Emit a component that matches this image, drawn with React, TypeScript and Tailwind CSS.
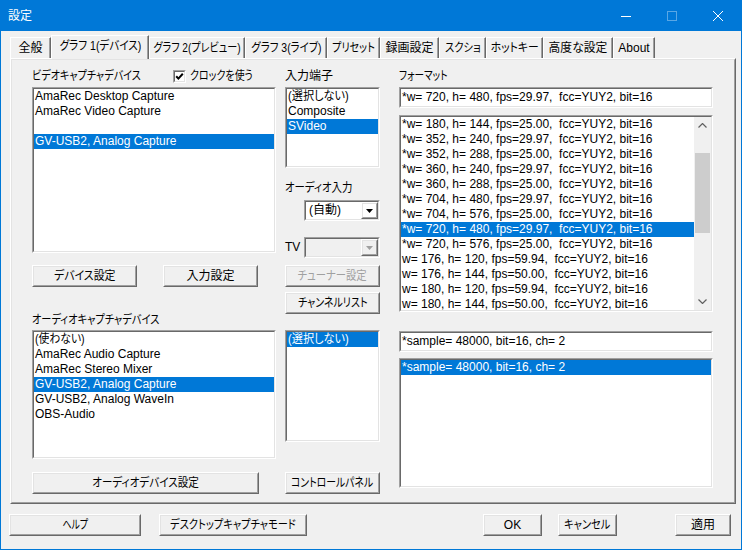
import React from "react";

type P = { className?: string; innerClassName?: string; children?: React.ReactNode };

function Raised({ className = "", innerClassName = "", children }: P) {
  return (
    <div className={`border border-t-white border-l-white border-r-[#696969] border-b-[#696969] ${className}`}>
      <div className={`h-full w-full border border-t-[#e3e3e3] border-l-[#e3e3e3] border-r-[#a0a0a0] border-b-[#a0a0a0] ${innerClassName}`}>
        {children}
      </div>
    </div>
  );
}

function Sunken({ className = "", innerClassName = "", children }: P) {
  return (
    <div className={`border border-t-[#a0a0a0] border-l-[#a0a0a0] border-r-white border-b-white ${className}`}>
      <div className={`h-full w-full border border-t-[#696969] border-l-[#696969] border-r-[#e3e3e3] border-b-[#e3e3e3] ${innerClassName}`}>
        {children}
      </div>
    </div>
  );
}

/* Japanese text, narrowed like the UI font of the reference */
function J({ s, o = "origin-left", children }: { s: string; o?: string; children: React.ReactNode }) {
  return <span className={`inline-block whitespace-nowrap ${o} ${s}`}>{children}</span>;
}

function Btn({ className = "", children, disabled }: P & { disabled?: boolean }) {
  return (
    <Raised
      className={`h-[22px] ${className}`}
      innerClassName={`flex items-center justify-center whitespace-nowrap ${disabled ? "text-[#a0a0a0]" : "text-black"}`}
    >
      {children}
    </Raised>
  );
}

function Item({ children, sel }: { children: React.ReactNode; sel?: boolean }) {
  return (
    <div className={`h-[15px] leading-[15px] px-px whitespace-pre ${sel ? "bg-[#0078d7] text-white" : "text-black"}`}>
      {children}
    </div>
  );
}

function Arrow({ color }: { color: string }) {
  return (
    <svg width="7" height="4" viewBox="0 0 7 4">
      <polygon points="0,0 7,0 3.5,4" fill={color} />
    </svg>
  );
}

const formats = [
  "*w= 180, h= 144, fps=25.00,  fcc=YUY2, bit=16",
  "*w= 352, h= 240, fps=29.97,  fcc=YUY2, bit=16",
  "*w= 352, h= 288, fps=25.00,  fcc=YUY2, bit=16",
  "*w= 360, h= 240, fps=29.97,  fcc=YUY2, bit=16",
  "*w= 360, h= 288, fps=25.00,  fcc=YUY2, bit=16",
  "*w= 704, h= 480, fps=29.97,  fcc=YUY2, bit=16",
  "*w= 704, h= 576, fps=25.00,  fcc=YUY2, bit=16",
  "*w= 720, h= 480, fps=29.97,  fcc=YUY2, bit=16",
  "*w= 720, h= 576, fps=25.00,  fcc=YUY2, bit=16",
  "w= 176, h= 120, fps=59.94,  fcc=YUY2, bit=16",
  "w= 176, h= 144, fps=50.00,  fcc=YUY2, bit=16",
  "w= 180, h= 120, fps=59.94,  fcc=YUY2, bit=16",
  "w= 180, h= 144, fps=50.00,  fcc=YUY2, bit=16",
];

const tabs: { label: string; w: string; s: string; sel?: boolean }[] = [
  { label: "全般", w: "w-[41px]", s: "scale-x-100" },
  { label: "グラフ 1(デバイス)", w: "w-[98px]", s: "scale-x-[0.88]", sel: true },
  { label: "グラフ 2(プレビュー)", w: "w-[96px]", s: "scale-x-[0.84]" },
  { label: "グラフ 3(ライブ)", w: "w-[82px]", s: "scale-x-[0.87]" },
  { label: "プリセット", w: "w-[53px]", s: "scale-x-[0.84]" },
  { label: "録画設定", w: "w-[59px]", s: "scale-x-100" },
  { label: "スクショ", w: "w-[47px]", s: "scale-x-[0.86]" },
  { label: "ホットキー", w: "w-[57px]", s: "scale-x-[0.9]" },
  { label: "高度な設定", w: "w-[70px]", s: "scale-x-[0.98]" },
  { label: "About", w: "w-[42px]", s: "scale-x-100" },
];

export default function App() {
  return (
    <div className="w-[742px] h-[550px] bg-[#0078d7] p-px flex flex-col text-[12px] leading-[15px] text-black [font-family:'Liberation_Sans','Noto_Sans_CJK_JP',sans-serif] [font-feature-settings:'palt']">
      {/* Title bar */}
      <div className="h-[30px] flex items-center text-white shrink-0">
        <span className="ml-[7px]">設定</span>
        <div className="ml-auto flex h-full">
          <div className="w-[46px] h-full flex items-center justify-center">
            <svg width="10" height="10" viewBox="0 0 10 10">
              <line x1="0" y1="5.5" x2="10" y2="5.5" stroke="white" strokeWidth="1" />
            </svg>
          </div>
          <div className="w-[46px] h-full flex items-center justify-center">
            <svg width="10" height="10" viewBox="0 0 10 10">
              <rect x="0.5" y="0.5" width="9" height="9" fill="none" stroke="rgba(255,255,255,0.35)" strokeWidth="1" />
            </svg>
          </div>
          <div className="w-[46px] h-full flex items-center justify-center">
            <svg width="10" height="10" viewBox="0 0 10 10">
              <line x1="0" y1="0" x2="10" y2="10" stroke="white" strokeWidth="1" />
              <line x1="10" y1="0" x2="0" y2="10" stroke="white" strokeWidth="1" />
            </svg>
          </div>
        </div>
      </div>

      {/* Body */}
      <div className="flex-1 bg-[#f0f0f0] flex flex-col">
        {/* Tabs */}
        <div className="h-[27px] flex items-end pl-[9px]">
          {tabs.map((t) =>
            t.sel ? (
              <div
                key={t.label}
                className={`${t.w} h-[24px] -mb-px relative z-10 bg-[#f0f0f0] border-t border-l border-t-white border-l-white border-r border-r-[#696969] shadow-[inset_-1px_0_0_#a0a0a0] flex items-center justify-center whitespace-nowrap pb-[2px]`}
              >
                <J s={t.s} o="origin-center">{t.label}</J>
              </div>
            ) : (
              <div
                key={t.label}
                className={`${t.w} h-[21px] border-t border-l border-t-white border-l-white border-r border-r-[#696969] shadow-[inset_-1px_0_0_#a0a0a0] flex items-center justify-center whitespace-nowrap`}
              >
                <J s={t.s} o="origin-center">{t.label}</J>
              </div>
            )
          )}
        </div>

        {/* Panel */}
        <Raised className="ml-[9px] w-[726px] h-[446px] shrink-0" innerClassName="flex pl-[20px] pt-[9px]">
          {/* Left block */}
          <div className="w-[348px] flex flex-col">
            {/* Section A */}
            <div className="flex items-start gap-[9px]">
              <div className="w-[244px] flex flex-col">
                <div className="h-[15px] flex items-center">
                  <span className="w-[141px] whitespace-nowrap">
                    <J s="scale-x-[0.84]">ビデオキャプチャデバイス</J>
                  </span>
                  <Sunken className="w-[13px] h-[13px]" innerClassName="bg-white flex items-center justify-center">
                    <svg width="9" height="9" viewBox="0 0 9 9">
                      <polyline points="1.2,4.2 3.4,6.6 7.8,1.8" fill="none" stroke="black" strokeWidth="2" />
                    </svg>
                  </Sunken>
                  <span className="ml-[4px] whitespace-nowrap">
                    <J s="scale-x-[0.83]">クロックを使う</J>
                  </span>
                </div>
                <Sunken className="mt-[3px] h-[166px]" innerClassName="bg-white overflow-hidden">
                  <Item>AmaRec Desktop Capture</Item>
                  <Item>AmaRec Video Capture</Item>
                  <Item> </Item>
                  <Item sel>GV-USB2, Analog Capture</Item>
                </Sunken>
              </div>
              <div className="w-[95px] flex flex-col">
                <div className="h-[15px] whitespace-nowrap">入力端子</div>
                <Sunken className="mt-[3px] h-[81px]" innerClassName="bg-white overflow-hidden">
                  <Item>
                    <J s="scale-x-[0.93]">(選択しない)</J>
                  </Item>
                  <Item>Composite</Item>
                  <Item sel>SVideo</Item>
                </Sunken>
                <div className="mt-[13px] h-[15px] whitespace-nowrap">
                  <J s="scale-x-[0.87]">オーディオ入力</J>
                </div>
                <Sunken className="mt-[4px] ml-[19px] w-[76px] h-[21px]" innerClassName="bg-white flex">
                  <div className="flex-1 pl-[3px] leading-[17px]">(自動)</div>
                  <Raised className="w-[17px] h-full" innerClassName="flex items-center justify-center">
                    <Arrow color="#000" />
                  </Raised>
                </Sunken>
                <div className="mt-[16px] h-[21px] flex items-center">
                  <span className="w-[19px]">TV</span>
                  <Sunken className="w-[76px] h-[21px]" innerClassName="bg-[#f0f0f0] flex">
                    <div className="flex-1" />
                    <Raised className="w-[17px] h-full" innerClassName="flex items-center justify-center">
                      <Arrow color="#a0a0a0" />
                    </Raised>
                  </Sunken>
                </div>
              </div>
            </div>

            {/* Section B */}
            <div className="mt-[7px] flex items-start gap-[9px]">
              <div className="w-[244px] flex gap-[26px]">
                <Btn className="w-[105px]">
                  <J s="scale-x-[0.91]" o="origin-center">デバイス設定</J>
                </Btn>
                <Btn className="w-[95px]">入力設定</Btn>
              </div>
              <Btn className="w-[95px]" disabled>
                <J s="scale-x-[0.86]" o="origin-center">チューナー設定</J>
              </Btn>
            </div>

            {/* Section C */}
            <div className="flex items-start gap-[9px]">
              <div className="w-[244px] flex flex-col">
                <div className="mt-[26px] h-[15px] whitespace-nowrap">
                  <J s="scale-x-[0.85]">オーディオキャプチャデバイス</J>
                </div>
                <Sunken className="mt-[2px] h-[129px]" innerClassName="bg-white overflow-hidden">
                  <Item>
                    <J s="scale-x-[0.9]">(使わない)</J>
                  </Item>
                  <Item>AmaRec Audio Capture</Item>
                  <Item>AmaRec Stereo Mixer</Item>
                  <Item sel>GV-USB2, Analog Capture</Item>
                  <Item>GV-USB2, Analog WaveIn</Item>
                  <Item>OBS-Audio</Item>
                </Sunken>
              </div>
              <div className="w-[95px] flex flex-col">
                <Btn className="mt-[5px] w-[95px]">
                  <J s="scale-x-[0.83]" o="origin-center">チャンネルリスト</J>
                </Btn>
                <Sunken className="mt-[16px] h-[112px]" innerClassName="bg-white overflow-hidden">
                  <Item sel>
                    <J s="scale-x-[0.93]">(選択しない)</J>
                  </Item>
                </Sunken>
              </div>
            </div>

            {/* Section D */}
            <div className="mt-[13px] flex items-start gap-[9px]">
              <div className="w-[244px]">
                <Btn className="w-[227px]">
                  <J s="scale-x-[0.88]" o="origin-center">オーディオデバイス設定</J>
                </Btn>
              </div>
              <Btn className="w-[95px]">
                <J s="scale-x-[0.82]" o="origin-center">コントロールパネル</J>
              </Btn>
            </div>
          </div>

          {/* Right column */}
          <div className="ml-[19px] w-[314px] flex flex-col">
            <div className="h-[15px] whitespace-nowrap">
              <J s="scale-x-[0.8]">フォーマット</J>
            </div>
            <Sunken className="mt-[3px] h-[21px]" innerClassName="bg-white px-px leading-[17px] whitespace-pre">
              *w= 720, h= 480, fps=29.97,  fcc=YUY2, bit=16
            </Sunken>
            <Sunken className="mt-[7px] h-[197px]" innerClassName="bg-white flex overflow-hidden">
              <div className="flex-1 overflow-hidden">
                {formats.map((f, i) => (
                  <Item key={i} sel={i === 7}>
                    {f}
                  </Item>
                ))}
              </div>
              <div className="w-[17px] bg-[#f0f0f0] flex flex-col">
                <div className="h-[17px] flex items-center justify-center">
                  <svg width="9" height="5" viewBox="0 0 9 5">
                    <polyline points="0.5,4.5 4.5,0.5 8.5,4.5" fill="none" stroke="#606060" strokeWidth="1.2" />
                  </svg>
                </div>
                <div className="flex-1 flex flex-col px-px">
                  <div className="mt-[19px] h-[80px] bg-[#cdcdcd]" />
                </div>
                <div className="h-[17px] flex items-center justify-center">
                  <svg width="9" height="5" viewBox="0 0 9 5">
                    <polyline points="0.5,0.5 4.5,4.5 8.5,0.5" fill="none" stroke="#606060" strokeWidth="1.2" />
                  </svg>
                </div>
              </div>
            </Sunken>
            <Sunken className="mt-[19px] h-[21px]" innerClassName="bg-white px-px leading-[17px] whitespace-pre">
              *sample= 48000, bit=16, ch= 2
            </Sunken>
            <Sunken className="mt-[6px] h-[130px]" innerClassName="bg-white overflow-hidden">
              <Item sel>*sample= 48000, bit=16, ch= 2</Item>
            </Sunken>
          </div>
        </Raised>

        {/* Footer buttons */}
        <div className="mt-[10px] flex items-start">
          <Btn className="ml-[8px] w-[132px]">
            <J s="scale-x-[0.75]" o="origin-center">ヘルプ</J>
          </Btn>
          <Btn className="ml-[18px] w-[148px]">
            <J s="scale-x-[0.85]" o="origin-center">デスクトップキャプチャモード</J>
          </Btn>
          <Btn className="ml-[176px] w-[59px]">OK</Btn>
          <Btn className="ml-[16px] w-[59px]">
            <J s="scale-x-[0.85]" o="origin-center">キャンセル</J>
          </Btn>
          <Btn className="ml-[58px] w-[56px]">適用</Btn>
        </div>
      </div>
    </div>
  );
}
